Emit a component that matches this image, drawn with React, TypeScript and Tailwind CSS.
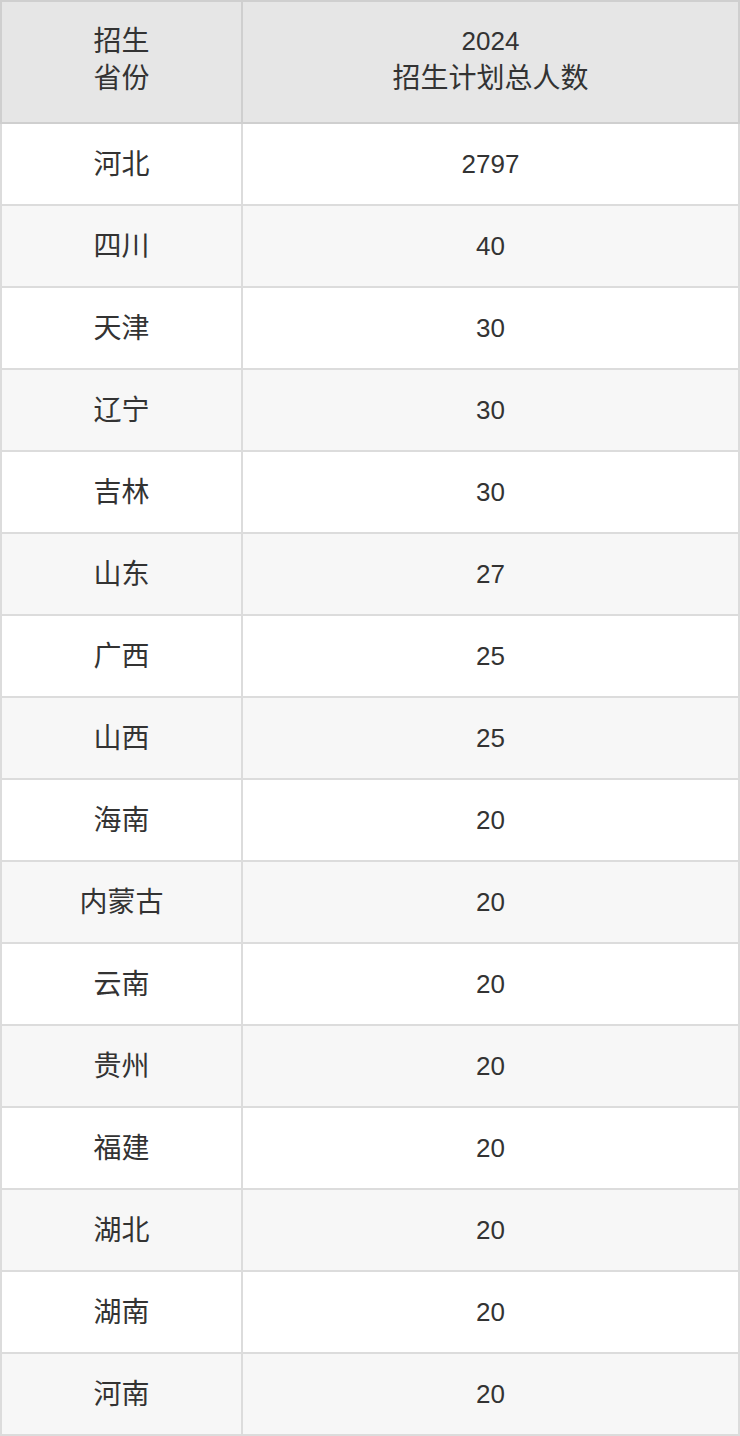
const rows: [string, string][] = [
  ["河北", "2797"],
  ["四川", "40"],
  ["天津", "30"],
  ["辽宁", "30"],
  ["吉林", "30"],
  ["山东", "27"],
  ["广西", "25"],
  ["山西", "25"],
  ["海南", "20"],
  ["内蒙古", "20"],
  ["云南", "20"],
  ["贵州", "20"],
  ["福建", "20"],
  ["湖北", "20"],
  ["湖南", "20"],
  ["河南", "20"],
];

export default function App() {
  return (
    <div
      className="w-[740px] bg-white text-[26px] text-[#333]"
      style={{ fontFamily: '"Liberation Sans", "Noto Sans CJK SC", sans-serif' }}
    >
      <div className="flex h-[124px] border-y-2 border-[#cfcfcf] bg-[#e6e6e6] leading-[37px]">
        <div className="flex w-[243px] flex-col items-center justify-center border-x-2 border-[#cfcfcf] pb-[4px] text-[28px]">
          <span>招生</span>
          <span>省份</span>
        </div>
        <div className="flex w-[497px] flex-col items-center justify-center border-r-2 border-[#cfcfcf] pb-[4px]">
          <span>2024</span>
          <span className="text-[28px]">招生计划总人数</span>
        </div>
      </div>
      {rows.map(([p, n], i) => (
        <div
          key={p}
          className={`flex h-[82px] border-b-2 border-[#dcdcdc] ${i % 2 === 1 ? "bg-[#f7f7f7]" : "bg-white"}`}
        >
          <div className="flex w-[243px] items-center justify-center border-x-2 border-[#dcdcdc] pt-[2px] text-[28px]">{p}</div>
          <div className="flex w-[497px] items-center justify-center border-r-2 border-[#dcdcdc]">{n}</div>
        </div>
      ))}
    </div>
  );
}
